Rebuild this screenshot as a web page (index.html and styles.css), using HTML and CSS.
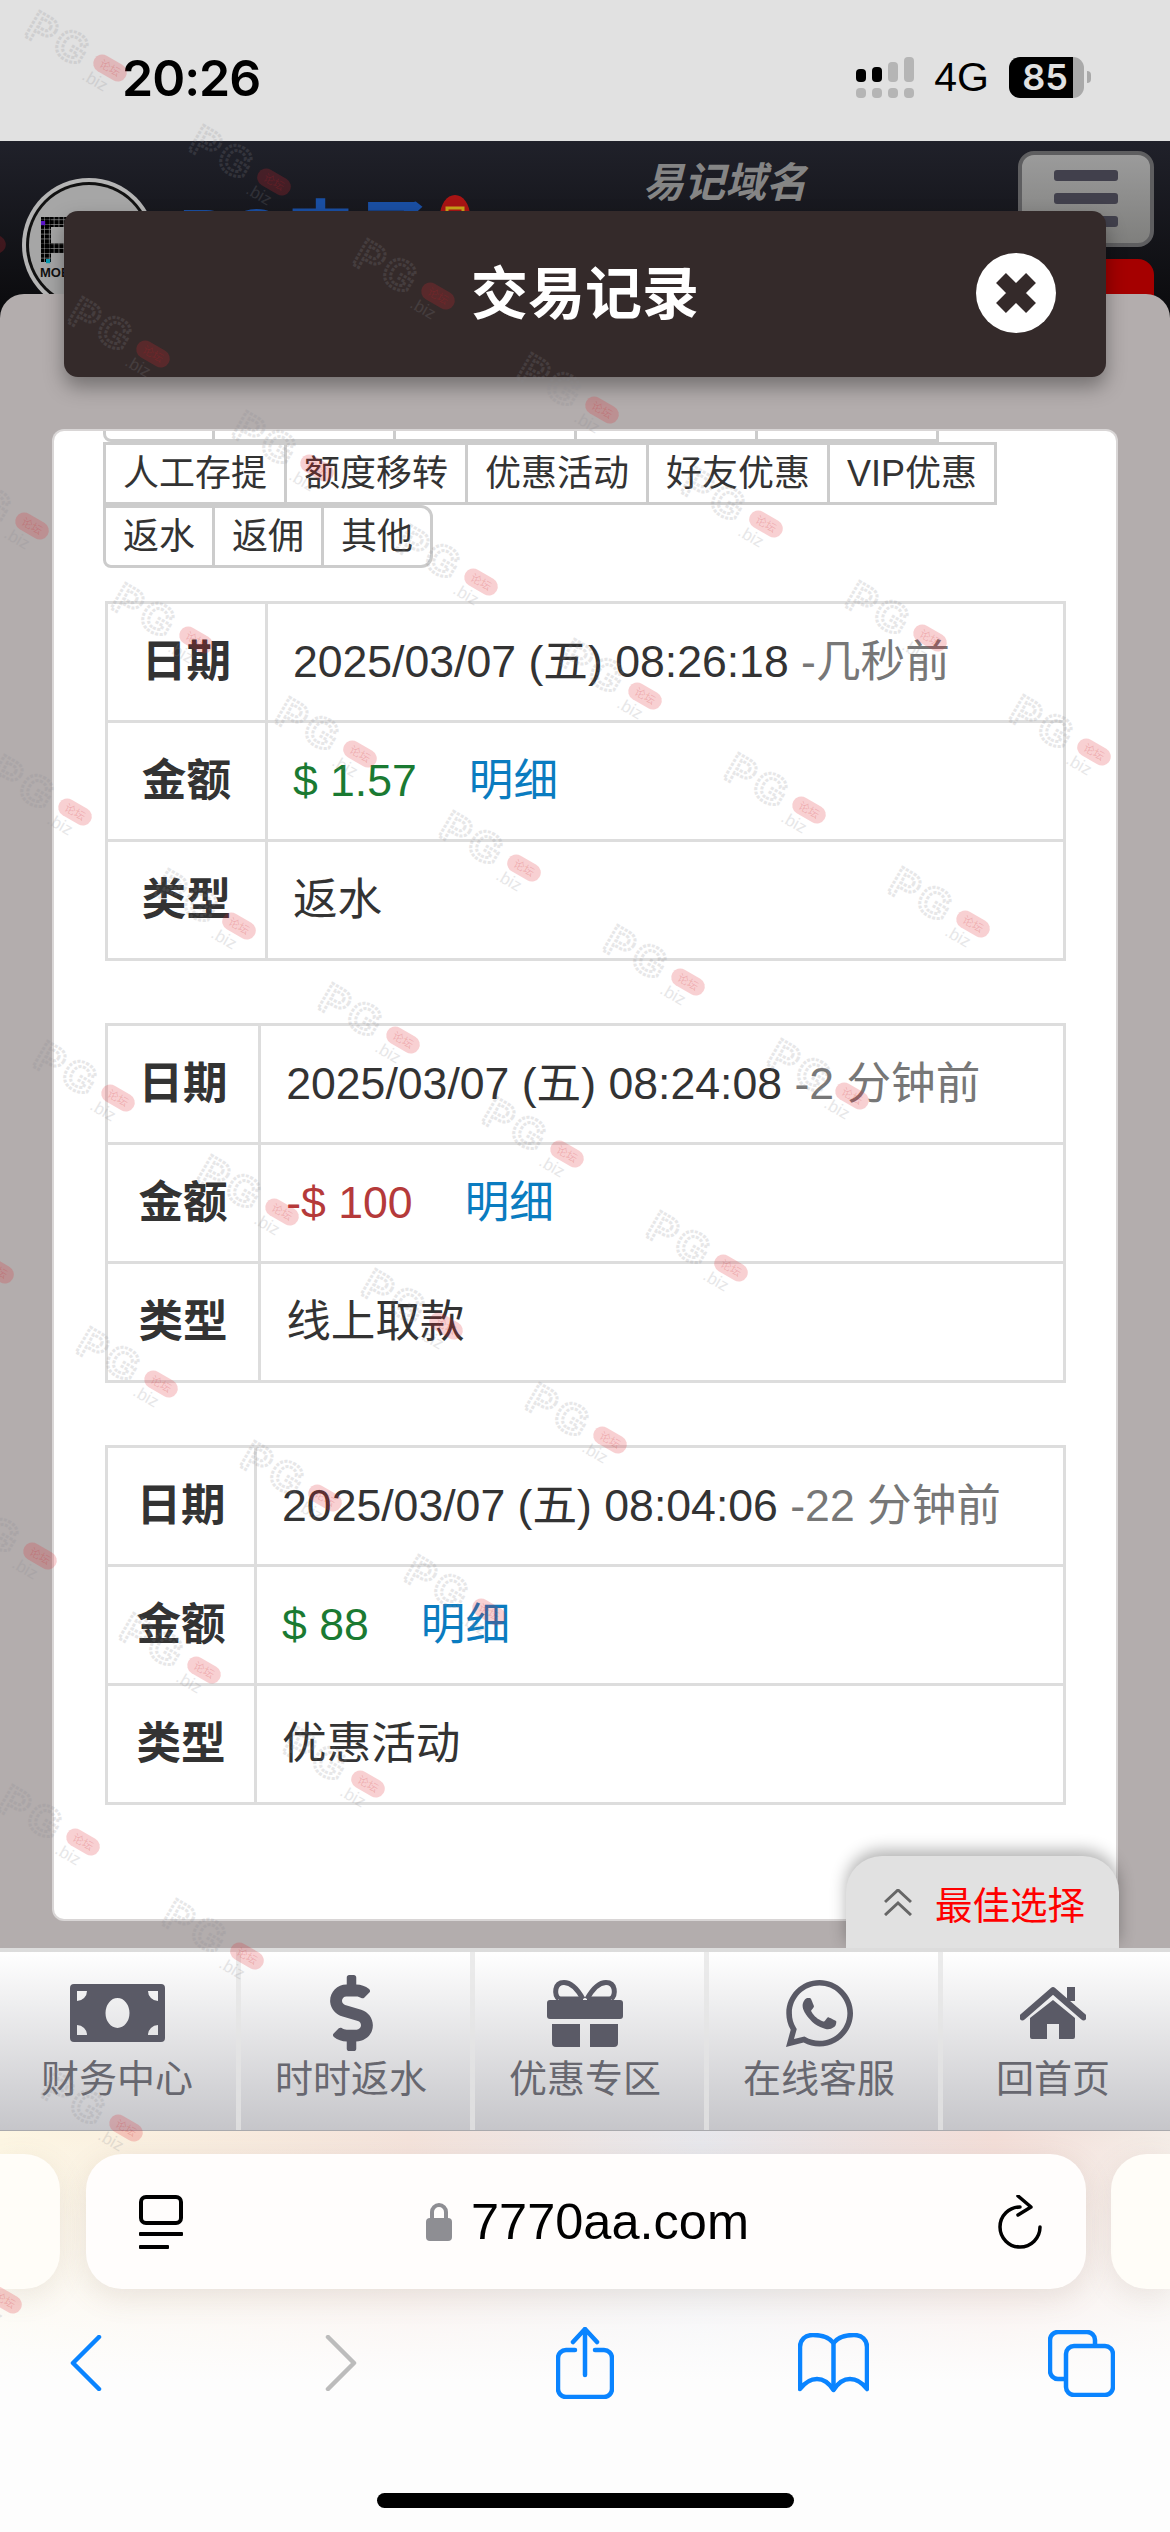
FILE: index.html
```html
<!DOCTYPE html>
<html lang="zh-CN">
<head>
    <meta charset="UTF-8">
    <meta name="viewport" content="width=device-width, initial-scale=1.0">
    <title>交易记录</title>
    <link rel="stylesheet" href="styles.css">
</head>
<body>
    <div class="status-bar">
        <div class="clock">20:26</div>
        <div class="status-right">
            <svg class="signal" viewBox="0 0 58 41">
                <rect class="on" x="0" y="12" width="10" height="13" rx="4"/>
                <rect class="on" x="16" y="10" width="10" height="15" rx="4"/>
                <rect class="off" x="32" y="5" width="10" height="20" rx="4"/>
                <rect class="off" x="48" y="0" width="10" height="25" rx="4"/>
                <rect class="off" x="0" y="31" width="10" height="10" rx="4"/>
                <rect class="off" x="16" y="31" width="10" height="10" rx="4"/>
                <rect class="off" x="32" y="31" width="10" height="10" rx="4"/>
                <rect class="off" x="48" y="31" width="10" height="10" rx="4"/>
            </svg>
            <span class="network">4G</span>
            <div class="battery">85</div>
            <div class="battery-nib"></div>
        </div>
    </div>

    <div class="site-header">
        <svg class="site-logo" viewBox="0 0 136 136">
            <defs>
                <pattern id="pixelGrid" width="4.8" height="4.8" patternUnits="userSpaceOnUse">
                    <rect width="4.2" height="4.2" fill="#000"/>
                </pattern>
            </defs>
            <circle cx="68" cy="68" r="67" fill="#b5b5b5"/>
            <circle cx="68" cy="68" r="63" fill="#111"/>
            <circle cx="68" cy="68" r="60" fill="#a6a6a6"/>
            <rect x="20" y="40" width="10" height="45" fill="url(#pixelGrid)"/>
            <rect x="20" y="40" width="60" height="10" fill="url(#pixelGrid)"/>
            <rect x="20" y="66" width="60" height="10" fill="url(#pixelGrid)"/>
            <rect x="20" y="44" width="4.2" height="4.2" fill="#5a14c8"/>
            <rect x="25" y="82" width="4.2" height="4.2" fill="#0a9ab0"/>
            <text class="site-logo-text" x="19" y="100">MOBILE</text>
        </svg>
        <div class="brand">PG电子</div>
        <svg class="brand-seal" viewBox="0 0 32 44">
            <ellipse cx="16" cy="22" rx="15" ry="21" fill="#a81414"/>
            <rect x="8" y="14" width="16" height="16" fill="none" stroke="#c9a21a" stroke-width="3"/>
        </svg>
        <div class="easy-domain">易记域名</div>
        <div class="header-actions">
            <div class="menu-button">
                <span></span>
                <span></span>
                <span></span>
            </div>
            <div class="red-button"></div>
        </div>
    </div>

    <div class="sheet">
        <div class="sheet-title">
            <h1>交易记录</h1>
            <div class="close-button">
                <svg viewBox="0 0 80 80">
                    <path d="M25 25 L55 55 M55 25 L25 55" stroke="#342a2a" stroke-width="14"/>
                </svg>
            </div>
        </div>

        <div class="panel">
            <div class="tabs">
                <!-- top row is scrolled out of the panel -->
                <div class="tab tab-first tab-short"></div>
                <div class="tab tab-long"></div>
                <div class="tab tab-long"></div>
                <div class="tab tab-long"></div>
                <div class="tab tab-long"></div>
                <div class="tab">人工存提</div>
                <div class="tab">额度移转</div>
                <div class="tab">优惠活动</div>
                <div class="tab">好友优惠</div>
                <div class="tab">VIP优惠</div>
                <div class="tab tab-first">返水</div>
                <div class="tab">返佣</div>
                <div class="tab tab-last">其他</div>
            </div>

            <table class="record">
                <tr>
                    <th>日期</th>
                    <td>2025/03/07 (五) 08:26:18 <span class="ago">-几秒前</span></td>
                </tr>
                <tr>
                    <th>金额</th>
                    <td><span class="plus">$ 1.57</span><a class="detail">明细</a></td>
                </tr>
                <tr>
                    <th>类型</th>
                    <td>返水</td>
                </tr>
            </table>

            <table class="record">
                <tr>
                    <th>日期</th>
                    <td>2025/03/07 (五) 08:24:08 <span class="ago">-2 分钟前</span></td>
                </tr>
                <tr>
                    <th>金额</th>
                    <td><span class="minus">-$ 100</span><a class="detail">明细</a></td>
                </tr>
                <tr>
                    <th>类型</th>
                    <td>线上取款</td>
                </tr>
            </table>

            <table class="record">
                <tr>
                    <th>日期</th>
                    <td>2025/03/07 (五) 08:04:06 <span class="ago">-22 分钟前</span></td>
                </tr>
                <tr>
                    <th>金额</th>
                    <td><span class="plus">$ 88</span><a class="detail">明细</a></td>
                </tr>
                <tr>
                    <th>类型</th>
                    <td>优惠活动</td>
                </tr>
            </table>
        </div>

        <div class="best-pick">
            <svg viewBox="0 0 28 27">
                <path d="M1 13 L14 1 L27 13 M1 26 L14 14 L27 26" fill="none" stroke="#666" stroke-width="3"/>
            </svg>
            <span>最佳选择</span>
        </div>
    </div>

    <div class="bottom-nav">
        <div class="nav-item">
            <div class="nav-icon">
                <svg width="95" height="58" viewBox="0 0 95 58">
                    <path fill-rule="evenodd" d="M4 0H91a4 4 0 0 1 4 4V54a4 4 0 0 1-4 4H4a4 4 0 0 1-4-4V4a4 4 0 0 1 4-4Z M7 7V17A10 10 0 0 0 17 7Z M78 7A10 10 0 0 0 88 17V7Z M7 41V51H17A10 10 0 0 0 7 41Z M88 41A10 10 0 0 0 78 51H88Z M47.5 14A12 15 0 1 0 47.5 44A12 15 0 1 0 47.5 14Z"/>
                </svg>
            </div>
            <span>财务中心</span>
        </div>
        <div class="nav-item">
            <div class="nav-icon">
                <svg width="43" height="76" viewBox="0 0 288 512">
                    <path d="M209.2 233.4l-108-31.6C88.7 198.2 80 186.5 80 173.5c0-16.3 13.2-29.5 29.5-29.5h66.3c12.2 0 24.2 3.7 34.2 10.5 6.1 4.1 14.3 3.1 19.5-2l34.8-34c7.1-6.9 6.1-18.4-1.8-24.5C238 74.8 207.4 64.1 176 64V16c0-8.8-7.2-16-16-16h-32c-8.8 0-16 7.2-16 16v48h-2.5C45.8 64-5.4 118.7.5 183.6c4.2 46.1 39.4 83.6 83.8 96.6l102.5 30c12.5 3.7 21.2 15.3 21.2 28.3 0 16.3-13.2 29.5-29.5 29.5h-66.3C100 368 88 364.3 78 357.5c-6.1-4.1-14.3-3.1-19.5 2l-34.8 34c-7.1 6.9-6.1 18.4 1.8 24.5 24.5 19.2 55.1 29.9 86.5 30v48c0 8.8 7.2 16 16 16h32c8.8 0 16-7.2 16-16v-48.2c46.6-.9 90.3-28.6 105.7-72.7 21.5-61.6-14.6-124.8-72.5-141.7z"/>
                </svg>
            </div>
            <span>时时返水</span>
        </div>
        <div class="nav-item">
            <div class="nav-icon">
                <svg width="76" height="67" viewBox="0 0 76 67">
                    <rect x="0" y="20" width="76" height="19" rx="3"/>
                    <path d="M5 44H33V67H9a4 4 0 0 1-4-4Z M43 44H71V63a4 4 0 0 1-4 4H43Z"/>
                    <path class="gift-ribbon" d="M36 19 C31 10 25 2.5 17 2.5 C7 2.5 7 15 12 19 M40 19 C45 10 51 2.5 59 2.5 C69 2.5 69 15 64 19"/>
                    <path class="gift-ribbon" d="M12 19 H36 M40 19 H64"/>
                </svg>
            </div>
            <span>优惠专区</span>
        </div>
        <div class="nav-item">
            <div class="nav-icon">
                <svg width="67" height="67" viewBox="0 32 448 448">
                    <path d="M380.9 97.1C339 55.1 283.2 32 223.9 32c-122.4 0-222 99.6-222 222 0 39.1 10.2 77.3 29.6 111L0 480l117.7-30.9c32.4 17.7 68.9 27 106.1 27h.1c122.3 0 224.1-99.6 224.1-222 0-59.3-25.2-115-67.1-157zm-157 341.6c-33.2 0-65.7-8.9-94-25.7l-6.7-4-69.8 18.3L72 359.2l-4.4-7c-18.5-29.4-28.2-63.3-28.2-98.2 0-101.7 82.8-184.5 184.6-184.5 49.3 0 95.6 19.2 130.4 54.1 34.8 34.9 56.2 81.2 56.1 130.5 0 101.8-84.9 184.6-186.6 184.6zm101.2-138.2c-5.5-2.8-32.8-16.2-37.9-18-5.1-1.9-8.8-2.8-12.5 2.8-3.7 5.6-14.3 18-17.6 21.8-3.2 3.7-6.5 4.2-12 1.4-32.6-16.3-54-29.1-75.5-66-5.7-9.8 5.7-9.1 16.3-30.3 1.8-3.7.9-6.9-.5-9.7-1.4-2.8-12.5-30.1-17.1-41.2-4.5-10.8-9.1-9.3-12.5-9.5-3.2-.2-6.9-.2-10.6-.2-3.7 0-9.7 1.4-14.8 6.9-5.1 5.6-19.4 19-19.4 46.3 0 27.3 19.9 53.7 22.6 57.4 2.8 3.7 39.1 59.7 94.8 83.8 35.2 15.2 49 16.5 66.6 13.9 10.7-1.6 32.8-13.4 37.4-26.4 4.6-13 4.6-24.1 3.2-26.4-1.3-2.5-5-3.9-10.5-6.6z"/>
                </svg>
            </div>
            <span>在线客服</span>
        </div>
        <div class="nav-item">
            <div class="nav-icon">
                <svg width="66" height="52" viewBox="0 0 66 52">
                    <path class="home-roof" d="M2.5 30 L33 3.5 L63.5 30"/>
                    <rect x="47" y="0" width="8" height="14"/>
                    <path fill-rule="evenodd" d="M33 13 L55 31 V50a2 2 0 0 1-2 2H39V37H27V52H12a2 2 0 0 1-2-2V31Z"/>
                </svg>
            </div>
            <span>回首页</span>
        </div>
    </div>

    <div class="safari">
        <div class="url-row">
            <div class="url-side url-side-left"></div>
            <div class="url-bar">
                <svg class="reader-icon" viewBox="0 0 44 54">
                    <rect x="2" y="2" width="40" height="26" rx="5" fill="none" stroke="#000" stroke-width="4"/>
                    <rect x="0" y="37" width="44" height="4" rx="1"/>
                    <rect x="0" y="50" width="30" height="4" rx="1"/>
                </svg>
                <div class="address">
                    <svg class="lock" viewBox="0 0 26 38">
                        <path d="M6 16V9a7 7 0 0 1 14 0V16" fill="none" stroke="#8e8e93" stroke-width="4"/>
                        <rect x="0" y="15" width="26" height="23" rx="4" fill="#8e8e93"/>
                    </svg>
                    <span>7770aa.com</span>
                </div>
                <svg class="reload-icon" viewBox="0 0 44 54">
                    <path d="M22 12 A20 20 0 1 0 42 32" fill="none" stroke="#000" stroke-width="3.5" stroke-linecap="round"/>
                    <path d="M20 1 L33 12 L20 20" fill="none" stroke="#000" stroke-width="3.5" stroke-linecap="round" stroke-linejoin="round"/>
                </svg>
            </div>
            <div class="url-side url-side-right"></div>
        </div>

        <div class="toolbar">
            <svg class="tool-back" viewBox="0 0 32 56">
                <path d="M29 2 L3 28 L29 54"/>
            </svg>
            <svg class="tool-forward" viewBox="0 0 32 56">
                <path d="M3 2 L29 28 L3 54"/>
            </svg>
            <svg class="tool-share" viewBox="0 0 58 72">
                <path d="M29 2V48 M17 15 L29 2 L41 15"/>
                <path d="M19 23H10a8 8 0 0 0-8 8V62a8 8 0 0 0 8 8H48a8 8 0 0 0 8-8V31a8 8 0 0 0-8-8H39"/>
            </svg>
            <svg class="tool-book" viewBox="0 0 71 60">
                <path d="M35.5 10V56"/>
                <path d="M35.5 10C31 4 24 2 15 2C7 2 2 7 2 14V56C8 48 14 46 19 46C26 46 31 50 35.5 57C40 50 45 46 52 46C57 46 63 48 69 56V14C69 7 64 2 56 2C47 2 40 4 35.5 10Z"/>
            </svg>
            <svg class="tool-tabs" viewBox="0 0 67 67">
                <path d="M17 49H10a8 8 0 0 1-8-8V10a8 8 0 0 1 8-8H39a8 8 0 0 1 8 8V15"/>
                <rect x="18" y="16" width="47" height="49" rx="8"/>
            </svg>
        </div>

        <div class="home-indicator"></div>
    </div>

    <svg class="watermarks" id="watermarks" width="1170" height="2532" viewBox="0 0 1170 2532">
        <defs>
            <g id="pgMark" transform="rotate(30)">
                <text class="mark-letter" x="-92" y="15">P</text>
                <text class="mark-letter" x="-60" y="15">G</text>
                <text class="mark-dot" x="-20" y="24">.biz</text>
                <rect class="mark-pill" x="-18" y="-9" width="36" height="18" rx="9"/>
                <text class="mark-pill-text" x="0" y="4">论坛</text>
            </g>
        </defs>
    </svg>

    <script src="watermark.js"></script>
</body>
</html>
```

FILE: styles.css
```css
* {
    box-sizing: border-box;
}

html, body {
    margin: 0;
    padding: 0;
}

body {
    position: relative;
    width: 1170px;
    height: 2532px;
    overflow: hidden;
    font-family: "Liberation Sans", "Noto Sans CJK SC", sans-serif;
    background-color: #fdfdfd;
    color: #333333;
}

/* Phone status bar */
.status-bar {
    height: 141px;
    background-color: #e1e1e1;
    display: flex;
    justify-content: space-between;
    padding: 48px 79px 0 122px;
}

.clock {
    font-family: Inter, "Liberation Sans", sans-serif;
    font-size: 50px;
    font-weight: 600;
    line-height: 60px;
    letter-spacing: -1px;
    color: #000000;
}

.status-right {
    display: flex;
    align-items: flex-start;
    padding-top: 9px;
}

.signal {
    width: 58px;
    height: 41px;
}

.signal .on {
    fill: #000000;
}

.signal .off {
    fill: #b5b5b5;
}

.network {
    margin-left: 20px;
    font-size: 41px;
    line-height: 41px;
    color: #000000;
}

.battery {
    width: 75px;
    height: 41px;
    margin-left: 20px;
    border-radius: 11px;
    background: linear-gradient(90deg, #000000 64px, #a9a9a9 64px);
    color: #e1e1e1;
    font-family: Inter, "Liberation Sans", sans-serif;
    font-size: 36px;
    font-weight: 600;
    line-height: 41px;
    text-align: center;
    padding-right: 3px;
}

.battery-nib {
    width: 4px;
    height: 12px;
    margin: 14px 0 0 3px;
    border-radius: 0 4px 4px 0;
    background-color: #a9a9a9;
}

/* Site header, mostly covered by the sheet */
.site-header {
    position: relative;
    height: 177px;
    overflow: hidden;
    display: flex;
    align-items: flex-start;
    padding-top: 36px;
    background: linear-gradient(#20212a, #0a0a0c);
}

.site-logo {
    flex: none;
    width: 136px;
    height: 136px;
    margin-left: 21px;
}

.site-logo-text {
    font-size: 13px;
    font-weight: 700;
    fill: #111111;
}

.brand {
    flex: none;
    width: 263px;
    margin: 18px 0 0 22px;
    font-size: 73px;
    font-weight: 700;
    line-height: 80px;
    color: #1a4fa3;
}

.brand-seal {
    flex: none;
    width: 32px;
    height: 44px;
    margin: 17px 0 0 -3px;
}

.easy-domain {
    flex: none;
    margin: -24px 0 0 172px;
    font-size: 41px;
    font-style: italic;
    font-weight: 700;
    line-height: 60px;
    color: #858585;
}

.header-actions {
    margin-left: auto;
    margin-right: 16px;
    margin-top: -26px;
    width: 136px;
}

.menu-button {
    height: 96px;
    padding-top: 15px;
    border: 4px solid #5e5e60;
    border-radius: 16px;
    background: linear-gradient(#9b9b9b, #7f7f7d);
}

.menu-button span {
    display: block;
    width: 64px;
    height: 11px;
    margin: 0 auto 12px;
    border-radius: 3px;
    background-color: #41404c;
}

.red-button {
    height: 80px;
    margin-top: 12px;
    border-radius: 16px;
    background-color: #a50000;
}

/* Sheet that slides over the page */
.sheet {
    position: relative;
    height: 1654px;
    margin-top: -24px;
    padding-top: 1px;
    border-radius: 24px 24px 0 0;
    background-color: #b3adad;
}

.sheet-title {
    position: relative;
    height: 166px;
    margin: -84px 64px 0;
    padding-bottom: 10px;
    border-radius: 14px;
    background-color: #342a2a;
    box-shadow: 0 10px 20px rgba(0, 0, 0, 0.35);
    display: flex;
    align-items: center;
    justify-content: center;
}

.sheet-title h1 {
    margin: 0;
    font-size: 57px;
    font-weight: 700;
    color: #ffffff;
}

.close-button {
    position: absolute;
    top: 42px;
    right: 50px;
    width: 80px;
    height: 80px;
    border-radius: 50%;
    background-color: #ffffff;
}

.close-button svg {
    display: block;
}

.panel {
    height: 1488px;
    margin: 54px 54px 0;
    padding: 0 50px 0 51px;
    overflow: hidden;
    border-radius: 10px;
    background-color: #ffffff;
    box-shadow: 0 0 0 2px #d9d6d6;
}

/* The tab list is scrolled, its first row is cut off at the top */
.tabs {
    display: flex;
    flex-wrap: wrap;
    width: 965px;
    margin: -52px 0 33px -2px;
}

.tab {
    height: 63px;
    margin-right: -3px;
    padding: 0 17px;
    border: 3px solid #cccccc;
    font-size: 36px;
    line-height: 57px;
    color: #333333;
}

.tab-short {
    width: 112px;
}

.tab-long {
    width: 184px;
}

.tab-first {
    border-bottom-left-radius: 8px;
}

.tab-last {
    border-radius: 0 12px 12px 0;
}

.record {
    width: 100%;
    margin-bottom: 62px;
    border-collapse: collapse;
    font-size: 44.6px;
    line-height: 62px;
}

.record th, .record td {
    padding: 27px 25px;
    border: 3px solid #dddddd;
    text-align: left;
    white-space: nowrap;
    font-weight: 400;
}

.record th {
    text-align: center;
    font-weight: 700;
}

.ago {
    color: #777777;
}

.plus {
    color: #1a7a32;
}

.minus {
    color: #b53a3a;
}

.detail {
    margin-left: 52px;
    color: #0a7cc0;
}

.best-pick {
    position: absolute;
    right: 51px;
    bottom: 0;
    width: 273px;
    height: 92px;
    display: flex;
    align-items: center;
    padding-left: 38px;
    border-radius: 36px 36px 0 0;
    background-color: #e1e1e1;
    box-shadow: 0 -6px 16px rgba(0, 0, 0, 0.3);
    color: #ff0000;
    font-size: 37.5px;
}

.best-pick svg {
    width: 28px;
    height: 27px;
    margin-right: 23px;
}

/* Fixed navigation at the bottom of the site */
.bottom-nav {
    position: relative;
    height: 183px;
    display: flex;
    border-top: 4px solid #dcdcdc;
    border-bottom: 1px solid #a9a9ad;
    background: linear-gradient(#ffffff, #c6c6ca);
}

.nav-item {
    position: relative;
    flex: 1;
    display: flex;
    flex-direction: column;
    align-items: center;
    padding-top: 23px;
    color: #67676f;
    font-size: 38px;
    line-height: 50px;
}

/* thin divider sits just past the right edge of each item */
.nav-item::after {
    content: "";
    position: absolute;
    top: 0;
    bottom: 0;
    right: -7px;
    width: 5px;
    background-color: rgba(228, 228, 228, 0.75);
}

.nav-item:last-child::after {
    display: none;
}

.nav-icon {
    height: 76px;
    margin-bottom: 3px;
    display: flex;
    align-items: center;
    fill: #5a5a66;
}

.gift-ribbon {
    fill: none;
    stroke: #5a5a66;
    stroke-width: 5;
}

.home-roof {
    fill: none;
    stroke: #5a5a66;
    stroke-width: 6.5;
    stroke-linecap: round;
    stroke-linejoin: round;
}

/* Safari chrome */
.safari {
    height: 401px;
    padding-top: 23px;
    background:
        linear-gradient(rgba(253, 253, 253, 0), #fdfdfd 250px),
        linear-gradient(90deg, #fdf6e2, #f4e2da 35%, #e7e7ec 60%, #f3ddd7 85%, #f4ece6);
}

.url-row {
    display: flex;
    justify-content: space-between;
    height: 135px;
}

.url-side {
    width: 60px;
    background-color: #fffdf8;
    box-shadow: 0 8px 30px rgba(120, 100, 80, 0.12);
}

.url-side-left {
    border-radius: 0 36px 36px 0;
}

.url-side-right {
    width: 59px;
    border-radius: 36px 0 0 36px;
}

.url-bar {
    position: relative;
    width: 1000px;
    display: flex;
    align-items: center;
    justify-content: space-between;
    padding: 0 43px 0 53px;
    border-radius: 36px;
    background-color: #fffdfc;
    box-shadow: 0 8px 30px rgba(120, 100, 80, 0.14);
}

.reader-icon {
    width: 44px;
    height: 54px;
}

.reload-icon {
    width: 44px;
    height: 54px;
}

.address {
    display: flex;
    align-items: center;
    margin-right: 6px;
    font-size: 50.5px;
    color: #000000;
}

.lock {
    width: 26px;
    height: 38px;
    margin-right: 19px;
}

.toolbar {
    display: grid;
    grid-template-columns: repeat(5, 248px);
    justify-items: center;
    align-items: center;
    height: 72px;
    margin: 38px 0 0 -35px;
}

.toolbar svg {
    fill: none;
    stroke: #0a84ff;
    stroke-width: 4.5;
    stroke-linecap: round;
    stroke-linejoin: round;
}

.tool-back {
    width: 32px;
    height: 56px;
    margin-right: 6px;
}

.toolbar .tool-forward {
    width: 32px;
    height: 56px;
    margin-left: 8px;
    stroke: #bcbcbc;
}

.tool-share {
    width: 58px;
    height: 72px;
}

.tool-book {
    width: 71px;
    height: 60px;
}

.tool-tabs {
    width: 67px;
    height: 67px;
}

.home-indicator {
    width: 417px;
    height: 15px;
    margin: 94px auto 0;
    border-radius: 8px;
    background-color: #000000;
}

/* Forum stamp repeated across the whole screen */
.watermarks {
    position: absolute;
    top: 0;
    left: 0;
    pointer-events: none;
}

.mark-letter {
    font-family: "Liberation Sans", sans-serif;
    font-size: 42px;
    font-weight: 700;
    fill: none;
    stroke: #8a8a90;
    stroke-width: 3;
    stroke-dasharray: 3 1.5;
    opacity: 0.2;
}

.mark-dot {
    font-family: "Liberation Sans", sans-serif;
    font-size: 17px;
    fill: #8a8a90;
    opacity: 0.2;
}

.mark-pill {
    fill: rgba(225, 40, 50, 0.22);
}

.mark-pill-text {
    font-family: "Noto Sans CJK SC", sans-serif;
    font-size: 11px;
    text-anchor: middle;
    fill: rgba(200, 30, 40, 0.2);
}
```

FILE: watermark.js
```js
// Stamps the forum mark on a slanted lattice over the page
const svg = document.getElementById('watermarks');
const ns = 'http://www.w3.org/2000/svg';

for (let i = -8; i <= 2; i++) {
    for (let j = i; j <= 14; j++) {
        const x = 766 + 285 * i - 121 * j;
        const y = 524 - 58 * i + 172 * j;
        if (x < -40 || x > 1240 || y < -40 || y > 2560) {
            continue;
        }
        const mark = document.createElementNS(ns, 'use');
        mark.setAttribute('href', '#pgMark');
        mark.setAttribute('x', x);
        mark.setAttribute('y', y);
        svg.appendChild(mark);
    }
}
```
